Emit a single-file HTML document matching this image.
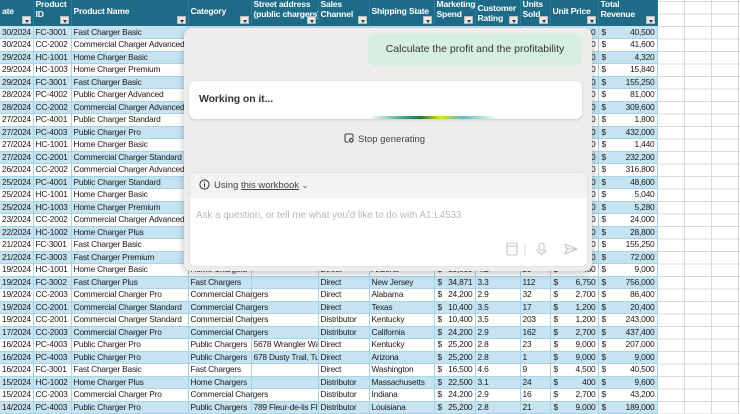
<!DOCTYPE html>
<html><head><meta charset="utf-8"><style>
*{margin:0;padding:0;box-sizing:border-box}
body{width:740px;height:414px;overflow:hidden;background:#fff;font-family:"Liberation Sans",sans-serif;position:relative}
.grid{position:absolute;left:657px;top:0;width:83px;height:414px;
background-image:linear-gradient(#dadada 1px,transparent 1px),linear-gradient(90deg,#dadada 1px,transparent 1px);
background-size:100% 12.5px,27px 100%;background-position:0 1px,0 0}
table{position:absolute;left:0;top:0;border-collapse:collapse;table-layout:fixed;width:657px;font-size:8.4px;color:#1a1a1a;letter-spacing:-0.2px}
th{background:#1e6b88;color:#fff;font-weight:bold;text-align:left;vertical-align:top;font-size:8.6px;line-height:9.5px;height:26px;padding:0 2px;position:relative;overflow:hidden;border-right:1px solid #2b7c9a;white-space:nowrap}
th i{position:absolute;right:2px;bottom:2px;width:9px;height:8px;background:#e8e8e8;border:1px solid #bbb}
th i:after{content:"";position:absolute;left:2px;top:2.5px;border-left:2.5px solid transparent;border-right:2.5px solid transparent;border-top:3px solid #333}
td{height:12.5px;padding:0 2px;white-space:nowrap;overflow:hidden;border-right:1px solid #a9d3e6;border-bottom:1px solid #a9d3e6;line-height:11px}
td:nth-child(4){overflow:visible}
tr.b td{background:#c5e3f1}
td.r{text-align:right;position:relative}
td s{text-decoration:none;position:absolute;left:3px}
.panel{position:absolute;left:184px;top:28px;width:408px;height:243px;background:#eeedec;border-radius:8px;box-shadow:0 2px 8px rgba(0,0,0,.25)}
</style></head><body>
<div class="grid"></div>
<table>
<colgroup><col style="width:33px"><col style="width:38px"><col style="width:117px"><col style="width:63px"><col style="width:67px"><col style="width:51px"><col style="width:65px"><col style="width:41px"><col style="width:45px"><col style="width:30px"><col style="width:48px"><col style="width:59px"></colgroup>
<tr><th style="padding-top:7px">ate<i></i></th><th>Product<br>ID<i></i></th><th style="padding-top:7px">Product Name<i></i></th><th style="padding-top:7px">Category<i></i></th><th>Street address<br>(public chargers)<i></i></th><th>Sales<br>Channel<i></i></th><th style="padding-top:7px">Shipping State<i></i></th><th>Marketing<br>Spend<i></i></th><th style="padding-top:4px">Customer<br>Rating<i></i></th><th>Units<br>Sold<i></i></th><th style="padding-top:7px">Unit Price<i></i></th><th>Total<br>Revenue<i></i></th></tr>
<tr class="b"><td>30/2024</td><td>FC-3001</td><td>Fast Charger Basic</td><td></td><td></td><td></td><td></td><td></td><td></td><td></td><td class="r">0</td><td class="r"><s>$</s>40,500</td></tr>
<tr><td>30/2024</td><td>CC-2002</td><td>Commercial Charger Advanced</td><td></td><td></td><td></td><td></td><td></td><td></td><td></td><td class="r">0</td><td class="r"><s>$</s>41,600</td></tr>
<tr class="b"><td>29/2024</td><td>HC-1001</td><td>Home Charger Basic</td><td></td><td></td><td></td><td></td><td></td><td></td><td></td><td class="r">0</td><td class="r"><s>$</s>4,320</td></tr>
<tr><td>29/2024</td><td>HC-1003</td><td>Home Charger Premium</td><td></td><td></td><td></td><td></td><td></td><td></td><td></td><td class="r">0</td><td class="r"><s>$</s>15,840</td></tr>
<tr class="b"><td>29/2024</td><td>FC-3001</td><td>Fast Charger Basic</td><td></td><td></td><td></td><td></td><td></td><td></td><td></td><td class="r">0</td><td class="r"><s>$</s>155,250</td></tr>
<tr><td>28/2024</td><td>PC-4002</td><td>Public Charger Advanced</td><td></td><td></td><td></td><td></td><td></td><td></td><td></td><td class="r">0</td><td class="r"><s>$</s>81,000</td></tr>
<tr class="b"><td>28/2024</td><td>CC-2002</td><td>Commercial Charger Advanced</td><td></td><td></td><td></td><td></td><td></td><td></td><td></td><td class="r">0</td><td class="r"><s>$</s>309,600</td></tr>
<tr><td>27/2024</td><td>PC-4001</td><td>Public Charger Standard</td><td></td><td></td><td></td><td></td><td></td><td></td><td></td><td class="r">0</td><td class="r"><s>$</s>1,800</td></tr>
<tr class="b"><td>27/2024</td><td>PC-4003</td><td>Public Charger Pro</td><td></td><td></td><td></td><td></td><td></td><td></td><td></td><td class="r">0</td><td class="r"><s>$</s>432,000</td></tr>
<tr><td>27/2024</td><td>HC-1001</td><td>Home Charger Basic</td><td></td><td></td><td></td><td></td><td></td><td></td><td></td><td class="r">0</td><td class="r"><s>$</s>1,440</td></tr>
<tr class="b"><td>27/2024</td><td>CC-2001</td><td>Commercial Charger Standard</td><td></td><td></td><td></td><td></td><td></td><td></td><td></td><td class="r">0</td><td class="r"><s>$</s>232,200</td></tr>
<tr><td>26/2024</td><td>CC-2002</td><td>Commercial Charger Advanced</td><td></td><td></td><td></td><td></td><td></td><td></td><td></td><td class="r">0</td><td class="r"><s>$</s>316,800</td></tr>
<tr class="b"><td>25/2024</td><td>PC-4001</td><td>Public Charger Standard</td><td></td><td></td><td></td><td></td><td></td><td></td><td></td><td class="r">0</td><td class="r"><s>$</s>48,600</td></tr>
<tr><td>25/2024</td><td>HC-1001</td><td>Home Charger Basic</td><td></td><td></td><td></td><td></td><td></td><td></td><td></td><td class="r">0</td><td class="r"><s>$</s>5,040</td></tr>
<tr class="b"><td>25/2024</td><td>HC-1003</td><td>Home Charger Premium</td><td></td><td></td><td></td><td></td><td></td><td></td><td></td><td class="r">0</td><td class="r"><s>$</s>5,280</td></tr>
<tr><td>23/2024</td><td>CC-2002</td><td>Commercial Charger Advanced</td><td></td><td></td><td></td><td></td><td></td><td></td><td></td><td class="r">0</td><td class="r"><s>$</s>24,000</td></tr>
<tr class="b"><td>22/2024</td><td>HC-1002</td><td>Home Charger Plus</td><td></td><td></td><td></td><td></td><td></td><td></td><td></td><td class="r">0</td><td class="r"><s>$</s>28,800</td></tr>
<tr><td>21/2024</td><td>FC-3001</td><td>Fast Charger Basic</td><td></td><td></td><td></td><td></td><td></td><td></td><td></td><td class="r">0</td><td class="r"><s>$</s>155,250</td></tr>
<tr class="b"><td>21/2024</td><td>FC-3003</td><td>Fast Charger Premium</td><td></td><td></td><td></td><td></td><td></td><td></td><td></td><td class="r">0</td><td class="r"><s>$</s>72,000</td></tr>
<tr><td>19/2024</td><td>HC-1001</td><td>Home Charger Basic</td><td>Home Chargers</td><td></td><td>Direct</td><td>Arizona</td><td class="r"><s>$</s>30,000</td><td>4.2</td><td>20</td><td class="r"><s>$</s>450</td><td class="r"><s>$</s>9,000</td></tr>
<tr class="b"><td>19/2024</td><td>FC-3002</td><td>Fast Charger Plus</td><td>Fast Chargers</td><td></td><td>Direct</td><td>New Jersey</td><td class="r"><s>$</s>34,871</td><td>3.3</td><td>112</td><td class="r"><s>$</s>6,750</td><td class="r"><s>$</s>756,000</td></tr>
<tr><td>19/2024</td><td>CC-2003</td><td>Commercial Charger Pro</td><td>Commercial Chargers</td><td></td><td>Direct</td><td>Alabama</td><td class="r"><s>$</s>24,200</td><td>2.9</td><td>32</td><td class="r"><s>$</s>2,700</td><td class="r"><s>$</s>86,400</td></tr>
<tr class="b"><td>19/2024</td><td>CC-2001</td><td>Commercial Charger Standard</td><td>Commercial Chargers</td><td></td><td>Direct</td><td>Texas</td><td class="r"><s>$</s>10,400</td><td>3.5</td><td>17</td><td class="r"><s>$</s>1,200</td><td class="r"><s>$</s>20,400</td></tr>
<tr><td>19/2024</td><td>CC-2001</td><td>Commercial Charger Standard</td><td>Commercial Chargers</td><td></td><td>Distributor</td><td>Kentucky</td><td class="r"><s>$</s>10,400</td><td>3.5</td><td>203</td><td class="r"><s>$</s>1,200</td><td class="r"><s>$</s>243,000</td></tr>
<tr class="b"><td>17/2024</td><td>CC-2003</td><td>Commercial Charger Pro</td><td>Commercial Chargers</td><td></td><td>Distributor</td><td>California</td><td class="r"><s>$</s>24,200</td><td>2.9</td><td>162</td><td class="r"><s>$</s>2,700</td><td class="r"><s>$</s>437,400</td></tr>
<tr><td>16/2024</td><td>PC-4003</td><td>Public Charger Pro</td><td>Public Chargers</td><td>5678 Wrangler Way</td><td>Direct</td><td>Kentucky</td><td class="r"><s>$</s>25,200</td><td>2.8</td><td>23</td><td class="r"><s>$</s>9,000</td><td class="r"><s>$</s>207,000</td></tr>
<tr class="b"><td>16/2024</td><td>PC-4003</td><td>Public Charger Pro</td><td>Public Chargers</td><td>678 Dusty Trail, Tu</td><td>Direct</td><td>Arizona</td><td class="r"><s>$</s>25,200</td><td>2.8</td><td>1</td><td class="r"><s>$</s>9,000</td><td class="r"><s>$</s>9,000</td></tr>
<tr><td>16/2024</td><td>FC-3001</td><td>Fast Charger Basic</td><td>Fast Chargers</td><td></td><td>Direct</td><td>Washington</td><td class="r"><s>$</s>16,500</td><td>4.6</td><td>9</td><td class="r"><s>$</s>4,500</td><td class="r"><s>$</s>40,500</td></tr>
<tr class="b"><td>15/2024</td><td>HC-1002</td><td>Home Charger Plus</td><td>Home Chargers</td><td></td><td>Distributor</td><td>Massachusetts</td><td class="r"><s>$</s>22,500</td><td>3.1</td><td>24</td><td class="r"><s>$</s>400</td><td class="r"><s>$</s>9,600</td></tr>
<tr><td>15/2024</td><td>CC-2003</td><td>Commercial Charger Pro</td><td>Commercial Chargers</td><td></td><td>Distributor</td><td>Indiana</td><td class="r"><s>$</s>24,200</td><td>2.9</td><td>16</td><td class="r"><s>$</s>2,700</td><td class="r"><s>$</s>43,200</td></tr>
<tr class="b"><td>14/2024</td><td>PC-4003</td><td>Public Charger Pro</td><td>Public Chargers</td><td>789 Fleur-de-lis Fl</td><td>Distributor</td><td>Louisiana</td><td class="r"><s>$</s>25,200</td><td>2.8</td><td>21</td><td class="r"><s>$</s>9,000</td><td class="r"><s>$</s>189,000</td></tr>
</table>

<div class="panel">
  <div style="position:absolute;left:184px;top:5px;width:214px;height:33px;background:#d7efe2;border-radius:7px;font-size:10.5px;color:#333;line-height:33px;text-align:center">Calculate the profit and the profitability</div>
  <div style="position:absolute;left:5px;top:53px;width:393px;height:38px;background:#fff;border-radius:7px;box-shadow:0 1px 3px rgba(0,0,0,.15);overflow:hidden">
    <div style="position:absolute;left:10px;top:12px;font-size:10.5px;color:#333;font-weight:bold;letter-spacing:-.1px">Working on it...</div>
    <div style="position:absolute;left:180px;top:35px;width:130px;height:3px;background:linear-gradient(90deg,rgba(255,255,255,0),#2f9a78 30%,#1e7a3a 40%,#d9e81c 55%,#5cc0b8 72%,rgba(255,255,255,0))"></div>
  </div>
  <div style="position:absolute;left:160px;top:105px;font-size:9.5px;color:#444">
    <svg width="11" height="11" viewBox="0 0 11 11" style="vertical-align:-2px;margin-right:3px"><rect x="1" y="1" width="8" height="8" rx="1.5" fill="none" stroke="#444" stroke-width="1.1"/><circle cx="7.3" cy="7.3" r="2.8" fill="#444" stroke="#eeedec" stroke-width="0.8"/><rect x="6.3" y="6.3" width="2" height="2" fill="#eee"/></svg>Stop generating</div>
  <div style="position:absolute;left:5px;top:144px;width:399px;height:95px;background:#f4f3f2;border-radius:7px;border:1px solid #e2e2e2;overflow:hidden">
    <div style="position:absolute;left:9px;top:6px;font-size:9.5px;color:#444">
      <svg width="11" height="11" viewBox="0 0 11 11" style="vertical-align:-2px;margin-right:4px"><circle cx="5.5" cy="5.5" r="4.6" fill="none" stroke="#333" stroke-width="1"/><rect x="5" y="4.6" width="1" height="3.6" fill="#333"/><rect x="5" y="2.7" width="1" height="1" fill="#333"/></svg>Using <span style="text-decoration:underline">this workbook</span> <span style="font-size:8px">&#8964;</span></div>
    <div style="position:absolute;left:0;top:25px;width:399px;height:70px;background:#fff">
      <div style="position:absolute;left:6px;top:12px;font-size:9.8px;color:#b8b8b8">Ask a question, or tell me what you'd like to do with A1:L4533</div>
      <svg style="position:absolute;left:316px;top:44px" width="80" height="14" viewBox="0 0 80 14">
        <rect x="1" y="1" width="10" height="12" rx="1.5" fill="none" stroke="#c4c4c4" stroke-width="1.1"/><line x1="1" y1="4" x2="11" y2="4" stroke="#c4c4c4"/>
        <line x1="19" y1="0" x2="19" y2="14" stroke="#ddd"/>
        <rect x="33" y="1" width="5" height="8" rx="2.5" fill="none" stroke="#c4c4c4" stroke-width="1.1"/><path d="M31 7a4.5 4.5 0 0 0 9 0M35.5 11.5v2" fill="none" stroke="#c4c4c4" stroke-width="1.1"/>
        <path d="M59 2l12 5-12 5 2-5z M61 7h10" fill="none" stroke="#c4c4c4" stroke-width="1.1" stroke-linejoin="round"/>
      </svg>
    </div>
  </div>
</div>
</body></html>
